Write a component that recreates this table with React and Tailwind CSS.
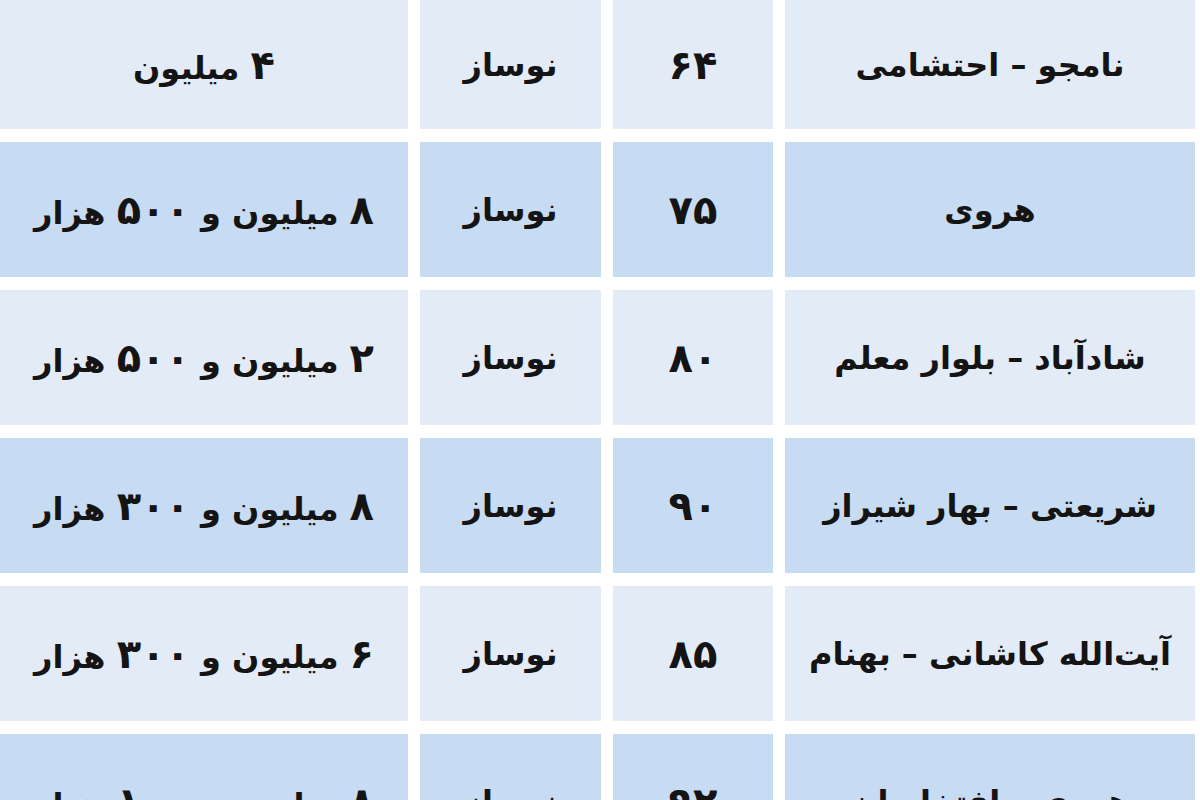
const rows = [
  ['نامجو – احتشامی', '۶۴', 'نوساز', '۴ میلیون'],
  ['هروی', '۷۵', 'نوساز', '۸ میلیون و ۵۰۰ هزار'],
  ['شادآباد – بلوار معلم', '۸۰', 'نوساز', '۲ میلیون و ۵۰۰ هزار'],
  ['شریعتی – بهار شیراز', '۹۰', 'نوساز', '۸ میلیون و ۳۰۰ هزار'],
  ['آیت‌الله کاشانی – بهنام', '۸۵', 'نوساز', '۶ میلیون و ۳۰۰ هزار'],
  ['هروی – افتخاریان', '۹۲', 'نوساز', '۸ میلیون و ۱۰۰ هزار'],
]

// digits are drawn larger than the letters in the source table
function Cell({ text }) {
  const parts = text.split(/([۰-۹]+)/)
  return parts.map((p, k) =>
    /[۰-۹]/.test(p) ? (
      <span key={k} className="text-[40px]">{p}</span>
    ) : (
      <span key={k}>{p}</span>
    )
  )
}

export default function App() {
  return (
    <div className="w-[1200px] h-[800px] overflow-hidden bg-white pr-[5px]">
      <div
        dir="rtl"
        className="grid grid-cols-[410px_160px_181px_408px] grid-rows-[129px_repeat(5,135px)] gap-x-[12px] gap-y-[13px] text-[32px] font-bold text-[#141414] [font-family:'DejaVu_Sans',sans-serif]"
      >
        {rows.map((row, i) =>
          row.map((cell, j) => (
            <div
              key={i + '-' + j}
              className={`flex items-center justify-center leading-none ${i % 2 === 0 ? 'bg-[#e3ebf7]' : 'bg-[#c7dbf2]'}`}
            >
              <span className="whitespace-pre"><Cell text={cell} /></span>
            </div>
          ))
        )}
      </div>
    </div>
  )
}
